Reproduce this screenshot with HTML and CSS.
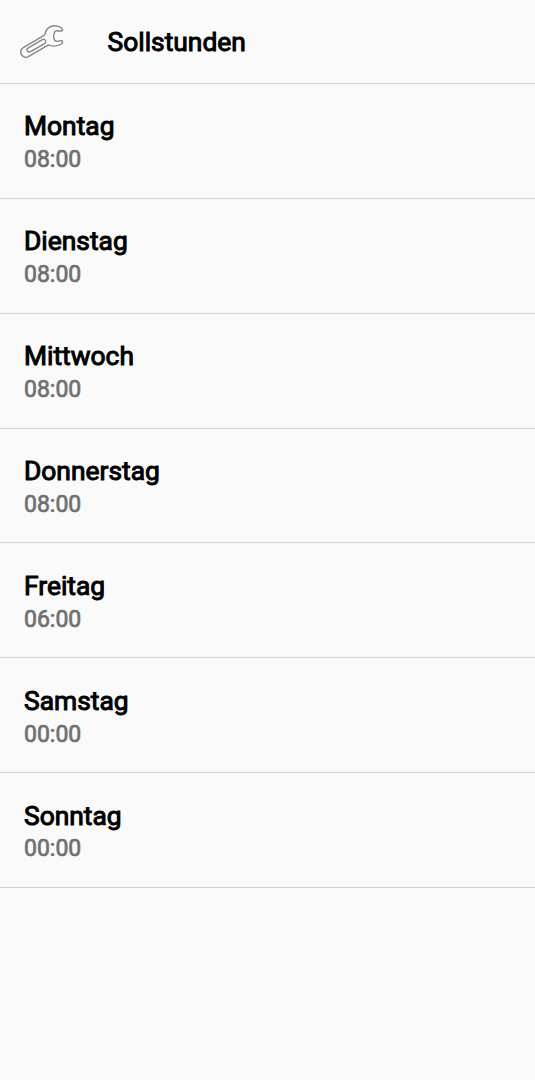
FILE: index.html
```
<!DOCTYPE html>
<html lang="de">
<head>
  <meta charset="UTF-8">
  <title>Sollstunden</title>
  <link rel="stylesheet" href="styles.css">
</head>
<body>

  <header class="header">
    <svg class="wrench" viewBox="0 0 195 150">
      <path d="M156 40 C148 34 136 31 127 33 C115 36 107 46 105 57 Q104 60 101 62 L40 98 C23 109 38 134 55 125 L113 91 Q116 89 120 91 C130 95 145 93 154 87 Q161 80 155 77 L140 79 Q134 78 132 72 Q129 63 134 51 Q136 47 142 48 L154 48 Q160 46 156 40 Z"/>
      <path d="M53 100 L98 73 Q103 71 106 76 Q109 82 105 85 L62 110 Q56 113 52 108 Q49 104 53 100 Z"/>
    </svg>
    <h1>Sollstunden</h1>
  </header>

  <div class="days">
    <div class="day">
      <div class="day-name">Montag</div>
      <div class="day-hours">08:00</div>
    </div>
    <div class="day">
      <div class="day-name">Dienstag</div>
      <div class="day-hours">08:00</div>
    </div>
    <div class="day">
      <div class="day-name">Mittwoch</div>
      <div class="day-hours">08:00</div>
    </div>
    <div class="day">
      <div class="day-name">Donnerstag</div>
      <div class="day-hours">08:00</div>
    </div>
    <div class="day">
      <div class="day-name">Freitag</div>
      <div class="day-hours">06:00</div>
    </div>
    <div class="day">
      <div class="day-name">Samstag</div>
      <div class="day-hours">00:00</div>
    </div>
    <div class="day">
      <div class="day-name">Sonntag</div>
      <div class="day-hours">00:00</div>
    </div>
  </div>

</body>
</html>
```
FILE: styles.css
```
* {
  box-sizing: border-box;
}
body {
  margin: 0;
  background: #fafafa;
  color: #000;
  font-family: Roboto, sans-serif;
}
.header {
  display: flex;
  align-items: center;
  gap: 32.5px;
  height: 84px;
  padding-left: 10px;
  border-bottom: 1px solid #d2d2d2;
}
.wrench {
  width: 65px;
  height: 50px;
  margin-top: -3px;
  fill: none;
  stroke: #858585;
  stroke-width: 4;
  stroke-linejoin: round;
}
h1 {
  margin: 0;
  font-size: 26.4px;
  font-weight: 400;
  line-height: 32px;
  -webkit-text-stroke: 1px #000;
}
.day {
  height: 114.86px;
  padding: 26.4px 24px 0;
  border-bottom: 1px solid #d2d2d2;
}
.day-name {
  font-size: 26.4px;
  line-height: 32px;
  -webkit-text-stroke: 1px #000;
}
.day-hours {
  margin-top: 1.9px;
  font-size: 23px;
  line-height: 32px;
  color: #707070;
  -webkit-text-stroke: 0.7px #707070;
}
```
